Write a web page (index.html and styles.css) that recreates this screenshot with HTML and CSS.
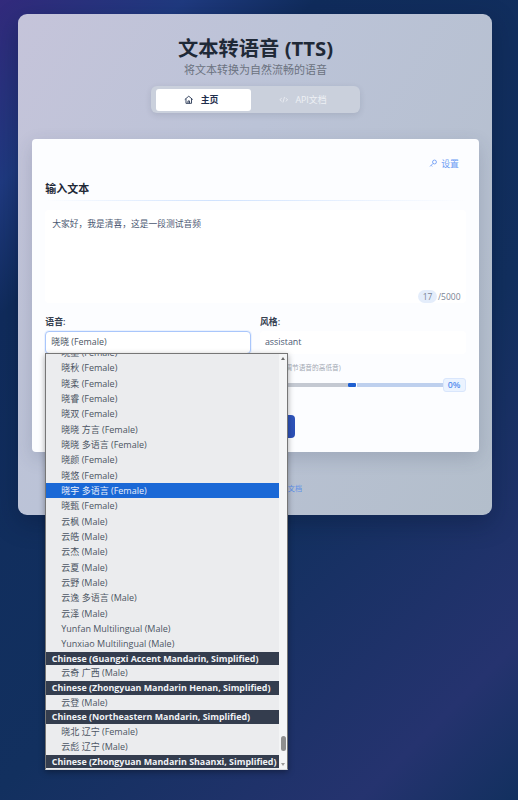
FILE: index.html
```html
<!DOCTYPE html>
<html lang="zh">
<head>
<meta charset="utf-8">
<title>文本转语音 (TTS)</title>
<link rel="stylesheet" href="styles.css">
</head>
<body>
<main class="panel">
  <header class="head">
    <h1 class="title">文本转语音 (TTS)</h1>
    <p class="subtitle">将文本转换为自然流畅的语音</p>
    <nav class="tabs">
      <a class="tab tab-active">
        <svg class="tab-icon" viewBox="0 0 24 24" fill="none" stroke="currentColor" stroke-width="2.2"><path d="M2 11.500 12 3l10 8.500"/><path d="M5 9.500V21h14V9.500"/><path d="M10 21v-6h4v6"/></svg>
        <span>主页</span>
      </a>
      <a class="tab tab-idle">
        <svg class="tab-icon" viewBox="0 0 24 24" fill="none" stroke="currentColor" stroke-width="2"><path d="M7 8l-5 4 5 4"/><path d="M17 8l5 4-5 4"/><path d="M14 5l-4 14"/></svg>
        <span>API文档</span>
      </a>
    </nav>
  </header>

  <section class="card">
    <div class="settings-row">
      <a class="settings">
        <svg class="key" viewBox="0 0 24 24" fill="none" stroke="currentColor" stroke-width="2.4"><circle cx="15.500" cy="8.500" r="5.500"/><path d="M11.500 12.500 3 21"/><path d="M6 18l3 3"/></svg>
        <span>设置</span>
      </a>
    </div>
    <h2 class="section-title">输入文本</h2>
    <div class="rule"></div>
    <div class="textbox">
      <p class="text-value">大家好，我是清喜，这是一段测试音频</p>
      <div class="counter"><span class="count">17</span><span>/5000</span></div>
    </div>
    <div class="fields">
      <div class="field">
        <label class="label">语音:</label>
        <div class="select">晓晓 (Female)</div>
        <div class="dropdown">
          <div class="scroll-list">
            <div class="opt">晓墨 (Female)</div>
            <div class="opt">晓秋 (Female)</div>
            <div class="opt">晓柔 (Female)</div>
            <div class="opt">晓睿 (Female)</div>
            <div class="opt">晓双 (Female)</div>
            <div class="opt">晓晓 方言 (Female)</div>
            <div class="opt">晓晓 多语言 (Female)</div>
            <div class="opt">晓颜 (Female)</div>
            <div class="opt">晓悠 (Female)</div>
            <div class="opt opt-selected">晓宇 多语言 (Female)</div>
            <div class="opt">晓甄 (Female)</div>
            <div class="opt">云枫 (Male)</div>
            <div class="opt">云皓 (Male)</div>
            <div class="opt">云杰 (Male)</div>
            <div class="opt">云夏 (Male)</div>
            <div class="opt">云野 (Male)</div>
            <div class="opt">云逸 多语言 (Male)</div>
            <div class="opt">云泽 (Male)</div>
            <div class="opt">Yunfan Multilingual (Male)</div>
            <div class="opt">Yunxiao Multilingual (Male)</div>
            <div class="group">Chinese (Guangxi Accent Mandarin, Simplified)</div>
            <div class="opt">云奇 广西 (Male)</div>
            <div class="group">Chinese (Zhongyuan Mandarin Henan, Simplified)</div>
            <div class="opt">云登 (Male)</div>
            <div class="group">Chinese (Northeastern Mandarin, Simplified)</div>
            <div class="opt">晓北 辽宁 (Female)</div>
            <div class="opt">云彪 辽宁 (Male)</div>
            <div class="group">Chinese (Zhongyuan Mandarin Shaanxi, Simplified)</div>
          </div>
          <div class="scrollbar">
            <span class="arrow arrow-up"></span>
            <span class="thumb"></span>
            <span class="arrow arrow-down"></span>
          </div>
        </div>
      </div>
      <div class="field">
        <label class="label">风格:</label>
        <div class="style-input">assistant</div>
      </div>
    </div>
    <p class="hint">(调节语音的高低音)</p>
    <div class="slider-row">
      <div class="track"><span class="track-left"></span><span class="slider-thumb"></span><span class="track-right"></span></div>
      <span class="pct">0%</span>
    </div>
    <div class="action-row"><button class="action">生成语音</button></div>
  </section>
  <p class="footer">查看 <a class="footer-link">API文档</a></p>
</main>
</body>
</html>
```
FILE: styles.css
```css
* { box-sizing: border-box; }
html, body { margin: 0; height: 800px; overflow: hidden; }
body {
  padding: 14px 26px 0 18px;
  font-family: "Open Sans", "Noto Sans CJK SC", sans-serif;
  color: #1f2937;
  background: linear-gradient(135deg, #322a7c 0%, #1f3a80 14%, #102c5c 24%, #12305f 60%, #25336f 88%, #12305f 100%);
}
.panel {
  height: 501px;
  padding: 24px 13px 0 14px;
  border-radius: 9px;
  background: linear-gradient(120deg, #c5c4da 0%, #bbc3d7 40%, #b3becb 100%);
  box-shadow: 0 8px 24px rgba(10, 20, 50, .35);
}
.head { display: flex; flex-direction: column; align-items: center; }
.title { margin: 0; font-size: 20.300px; line-height: 20px; font-weight: 700; color: #1f2937; }
.subtitle { margin: 5px 0 0; font-size: 11px; line-height: 14px; color: #6b7280; }
.tabs {
  display: flex;
  width: 209px;
  height: 27px;
  margin-top: 9px;
  padding: 2.500px 5px;
  border-radius: 6px;
  background: #cad0dc;
  box-shadow: 0 2px 6px rgba(30, 41, 59, .12);
}
.tab { display: flex; align-items: center; justify-content: center; gap: 7px; height: 22px; font-size: 8.900px; }
.tab-active { width: 94.500px; padding-right: 4px; border-radius: 3px; background: #fff; color: #1f2f4d; font-weight: 600; }
.tab-idle { flex: 1; color: #eef0f5; }
.tab-icon { width: 9.500px; height: 9.500px; }
.card {
  height: 313px;
  margin-top: 26px;
  padding: 14px 13.500px 0 13.300px;
  border-radius: 4px;
  background: #fcfdff;
  box-shadow: 0 6px 18px rgba(50, 60, 90, .18);
}
.settings-row { display: flex; justify-content: flex-end; height: 20px; padding-right: 6.500px; align-items: center; }
.settings { display: flex; align-items: center; gap: 4px; font-size: 8.900px; color: #6a9bf4; }
.key { width: 8.500px; height: 8.500px; }
.section-title { margin: 9px 0 0; font-size: 11px; line-height: 14px; font-weight: 700; color: #1f2937; }
.rule { height: 1px; margin-top: 4px; background: linear-gradient(90deg, rgba(191, 219, 254, 0), #cfe2fe 40%, rgba(191, 219, 254, 0)); }
.textbox {
  position: relative;
  height: 93px;
  margin-top: 9px;
  padding: 8px 7px;
  border-radius: 4px;
  background: #fff;
}
.text-value { margin: 0; font-size: 8.750px; line-height: 12px; color: #4b5872; }
.counter { position: absolute; right: 5px; bottom: 0; display: flex; align-items: center; font-size: 8.500px; color: #7b8494; }
.count { padding: 0 4.500px; border-radius: 7px; background: #e4edfb; line-height: 13px; margin-right: 1px; }
.fields { display: flex; gap: 9px; margin-top: 12px; }
.field { position: relative; flex: 1; }
.label { display: block; font-size: 8.900px; line-height: 14px; font-weight: 600; color: #374151; }
.select {
  height: 22.500px;
  margin-top: 2px;
  padding: 0 5px;
  border: 1px solid #a9c6fb;
  border-radius: 4px;
  background: #fff;
  box-shadow: 0 0 0 1px rgba(169, 198, 251, .2);
  font-size: 8.900px;
  line-height: 20.500px;
  color: #4b5563;
}
.style-input {
  height: 22.500px;
  margin-top: 2px;
  padding: 0 5px;
  border-radius: 4px;
  background: #fff;
  font-size: 8.900px;
  line-height: 22.500px;
  color: #4b5872;
}
.dropdown {
  position: absolute;
  z-index: 5;
  left: 0;
  top: 38px;
  display: flex;
  width: 243px;
  height: 417px;
  overflow: hidden;
  border: 1px solid #767676;
  border-bottom-color: #d8dade;
  background: #ebecee;
  box-shadow: 0 2px 6px rgba(0, 0, 0, .35);
}
.scroll-list { flex: 1; margin-top: -9px; }
.opt {
  height: 15.330px;
  padding-left: 15px;
  font-size: 9px;
  line-height: 15.330px;
  color: #4b5563;
  white-space: nowrap;
}
.opt-selected { background: #1a68d6; color: #e8eefb; }
.group {
  height: 13.900px;
  padding-left: 5.500px;
  font-size: 8.900px;
  font-weight: 700;
  line-height: 13.900px;
  color: #f1f3f6;
  background: #343d4e;
  white-space: nowrap;
}
.scrollbar {
  position: relative;
  width: 8.200px;
  flex: none;
  background: #f4f5f6;
}
.arrow { position: absolute; left: 1.500px; width: 0; height: 0; border-left: 2.500px solid transparent; border-right: 2.500px solid transparent; }
.arrow-up { top: 3px; border-bottom: 3px solid #6d6d6d; }
.arrow-down { bottom: 3px; border-top: 3px solid #9a9a9a; }
.thumb { position: absolute; left: 1.500px; bottom: 18px; width: 5px; height: 15px; border-radius: 3px; background: #8f8f8f; }
.hint { margin: 9.500px 0 0; padding-left: 238px; font-size: 6.700px; line-height: 10px; color: #a2a8b3; }
.slider-row { display: flex; align-items: center; padding-left: 243px; margin-top: 5px; height: 14px; }
.track { display: flex; align-items: center; flex: 1; height: 4px; }
.track-left { width: 59.500px; height: 3.500px; background: #c4c9d2; }
.slider-thumb { width: 8px; height: 3.500px; margin-left: .5px; border-radius: 1px; background: #1f5fd0; }
.track-right { flex: 1; height: 3.500px; margin-left: 1px; background: #bed0ee; }
.pct { width: 23px; height: 14px; border: 1px solid #d9e6fc; border-radius: 3px; background: #ebf3ff; font-size: 8.900px; line-height: 12px; text-align: center; font-weight: 600; color: #5a8fee; }
.action-row { display: flex; justify-content: flex-end; padding-right: 170.500px; margin-top: 23px; }
.action { width: 150px; height: 23px; padding: 0; border: 0; border-radius: 4px; background: linear-gradient(135deg, #3f74e0, #2c4fb6); color: #fff; font-family: inherit; font-size: 8.900px; }
.footer { margin: 31px 0 0; padding-right: 177px; text-align: right; font-size: 7.100px; line-height: 10px; color: #6b7280; }
.footer-link { color: #5b8fe8; }
```
